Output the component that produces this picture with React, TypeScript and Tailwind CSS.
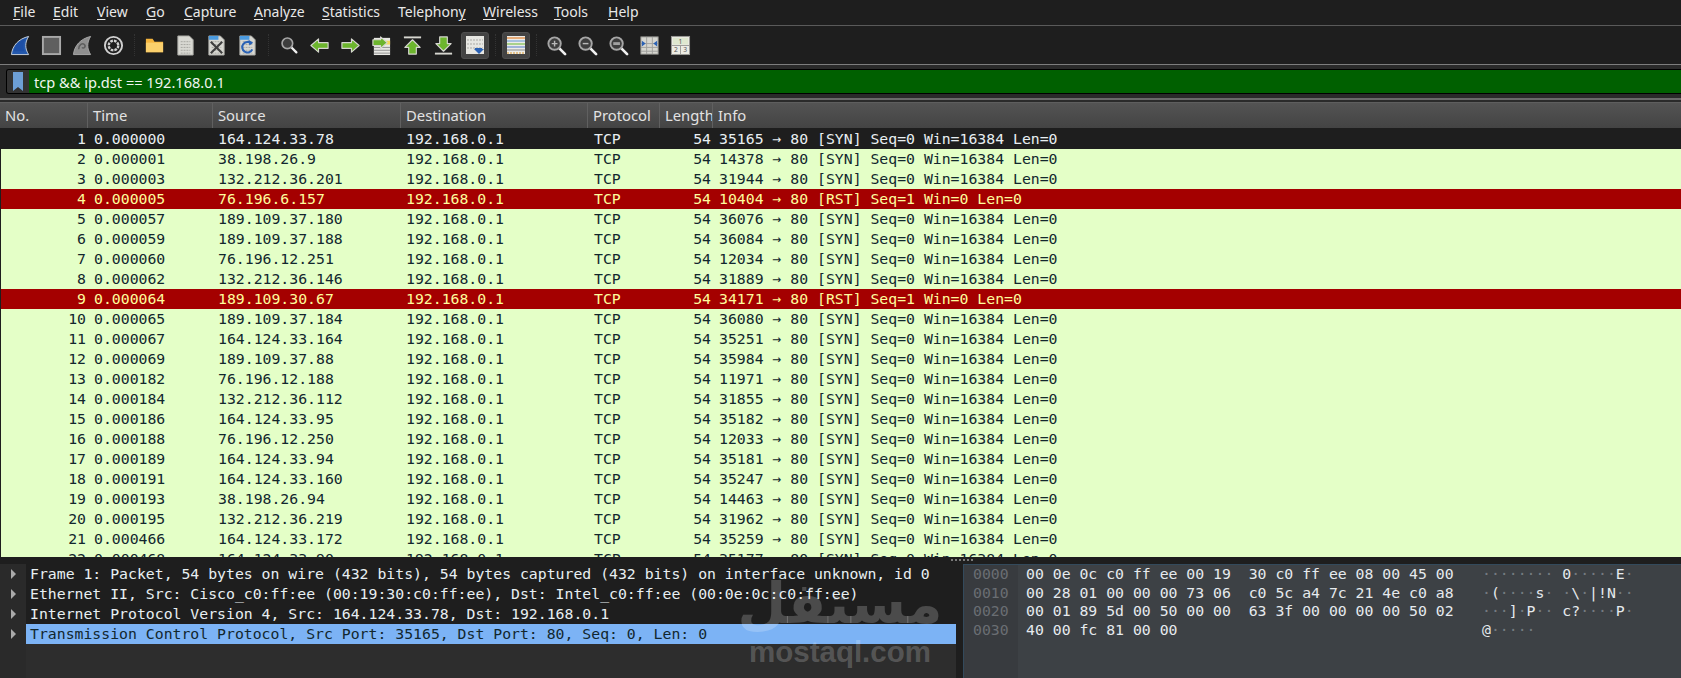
const UI_FONT = "font-['Noto_Sans','Open_Sans',sans-serif]";
const MONO_FONT = "font-['DejaVu_Sans_Mono','Liberation_Mono',monospace]";

type Packet = [number, string, string, number, "SYN" | "RST"];

const PACKETS: Packet[] = [
  [1, "0.000000", "164.124.33.78", 35165, "SYN"],
  [2, "0.000001", "38.198.26.9", 14378, "SYN"],
  [3, "0.000003", "132.212.36.201", 31944, "SYN"],
  [4, "0.000005", "76.196.6.157", 10404, "RST"],
  [5, "0.000057", "189.109.37.180", 36076, "SYN"],
  [6, "0.000059", "189.109.37.188", 36084, "SYN"],
  [7, "0.000060", "76.196.12.251", 12034, "SYN"],
  [8, "0.000062", "132.212.36.146", 31889, "SYN"],
  [9, "0.000064", "189.109.30.67", 34171, "RST"],
  [10, "0.000065", "189.109.37.184", 36080, "SYN"],
  [11, "0.000067", "164.124.33.164", 35251, "SYN"],
  [12, "0.000069", "189.109.37.88", 35984, "SYN"],
  [13, "0.000182", "76.196.12.188", 11971, "SYN"],
  [14, "0.000184", "132.212.36.112", 31855, "SYN"],
  [15, "0.000186", "164.124.33.95", 35182, "SYN"],
  [16, "0.000188", "76.196.12.250", 12033, "SYN"],
  [17, "0.000189", "164.124.33.94", 35181, "SYN"],
  [18, "0.000191", "164.124.33.160", 35247, "SYN"],
  [19, "0.000193", "38.198.26.94", 14463, "SYN"],
  [20, "0.000195", "132.212.36.219", 31962, "SYN"],
  [21, "0.000466", "164.124.33.172", 35259, "SYN"],
  [22, "0.000468", "164.124.33.90", 35177, "SYN"],
];

const MENU: [string, string, string, string][] = [
  ["", "F", "ile", "w-[40px]"],
  ["", "E", "dit", "w-[44px]"],
  ["", "V", "iew", "w-[49px]"],
  ["", "G", "o", "w-[38px]"],
  ["", "C", "apture", "w-[70px]"],
  ["", "A", "nalyze", "w-[68px]"],
  ["", "S", "tatistics", "w-[76px]"],
  ["Telephon", "y", "", "w-[85px]"],
  ["", "W", "ireless", "w-[71px]"],
  ["", "T", "ools", "w-[54px]"],
  ["", "H", "elp", "w-[40px]"],
];

const COLS = "grid grid-cols-[88px_125px_188px_187px_72px_53px_1fr]";

const HEX = [
  ["0000", "00 0e 0c c0 ff ee 00 19  30 c0 ff ee 08 00 45 00", "········ 0·····E·"],
  ["0010", "00 28 01 00 00 00 73 06  c0 5c a4 7c 21 4e c0 a8", "·(····s· ·\\·|!N··"],
  ["0020", "00 01 89 5d 00 50 00 00  63 3f 00 00 00 00 50 02", "···]·P·· c?····P·"],
  ["0030", "40 00 fc 81 00 00", "@·····"],
];

const DETAILS = [
  "Frame 1: Packet, 54 bytes on wire (432 bits), 54 bytes captured (432 bits) on interface unknown, id 0",
  "Ethernet II, Src: Cisco_c0:ff:ee (00:19:30:c0:ff:ee), Dst: Intel_c0:ff:ee (00:0e:0c:c0:ff:ee)",
  "Internet Protocol Version 4, Src: 164.124.33.78, Dst: 192.168.0.1",
  "Transmission Control Protocol, Src Port: 35165, Dst Port: 80, Seq: 0, Len: 0",
];

function Icon({ children }: { children: React.ReactNode }) {
  return (
    <div className="w-[31px] h-[38px] flex items-center justify-center shrink-0">
      <svg width="21" height="21" viewBox="0 0 22 22">
        {children}
      </svg>
    </div>
  );
}

function Sep() {
  return (
    <div className="w-[10px] h-[38px] flex items-center justify-center shrink-0">
      <div className="h-[22px] border-l border-dotted border-[#333333]" />
    </div>
  );
}

function Fin({ grey }: { grey?: boolean }) {
  return (
    <g>
      <path
        d="M1.5 20.5C2.5 11 9 4 19.5 1.5C15.5 8 15.5 14 19.5 20.5Z"
        fill={grey ? "#8f8f8f" : "#2459ad"}
        stroke={grey ? "#a8a8a8" : "#c9d3de"}
        strokeWidth="1"
      />
      {grey ? (
        <path d="M7 15C7 10 11 8 13 10C15 12 12 15 10.500 13" fill="none" stroke="#5e5e5e" strokeWidth="1.600" />
      ) : (
        <path d="M4 17C5 11 10 6 16 4C13.500 9 13.500 13 15 17Z" fill="#1d4fa6" />
      )}
    </g>
  );
}

function Paper({ children }: { children?: React.ReactNode }) {
  return (
    <g>
      <path d="M3 1H15L19 5V21H3Z" fill="#d8d8d2" stroke="#a9a9a5" strokeWidth="1" />
      <path d="M6 7H16M6 10H16M6 13H16M6 16H16M6 19H16" stroke="#a5a5a0" strokeWidth="1" strokeDasharray="2 1" />
      {children}
    </g>
  );
}

function Lens({ mark }: { mark?: "plus" | "minus" | "bar" | "none" }) {
  return (
    <g>
      <path d="M13.500 13.500L20 20" stroke="#f0f0f0" strokeWidth="2.800" strokeLinecap="round" />
      <circle cx="9" cy="9" r="6.500" fill="#3d3d3d" stroke="#a6a6a6" strokeWidth="2" />
      {mark === "plus" && <path d="M6 9H12M9 6V12" stroke="#b8b8b8" strokeWidth="1.500" />}
      {mark === "minus" && <path d="M6 9H12" stroke="#b8b8b8" strokeWidth="1.500" />}
      {mark === "bar" && <rect x="5.500" y="7.500" width="7" height="3" fill="#a0a0a0" />}
    </g>
  );
}

function Arrow({ d }: { d: string }) {
  return <path d={d} fill="#6cb52d" stroke="#d6d6d0" strokeWidth="1.200" strokeLinejoin="round" />;
}

function Toolbar() {
  return (
    <div className="h-[38px] flex items-center pl-[5px] bg-[#1e1e1e] border-b border-[#7d7d7d] box-content">
      <Icon><Fin /></Icon>
      <Icon>
        <rect x="2" y="2" width="18" height="18" fill="#5f5f5f" stroke="#a9a9a9" strokeWidth="2" />
      </Icon>
      <Icon><Fin grey /></Icon>
      <Icon>
        <circle cx="11" cy="11" r="9" fill="none" stroke="#d0d0d0" strokeWidth="2" />
        <circle cx="11" cy="11" r="5" fill="none" stroke="#cfcfcf" strokeWidth="2.500" strokeDasharray="2.800 1.100" />
      </Icon>
      <Sep />
      <Icon>
        <path d="M2 4H9L11 7H20V18H2Z" fill="#f4b43c" />
        <rect x="2" y="8" width="18" height="10" fill="#fbd06c" />
      </Icon>
      <Icon><Paper /></Icon>
      <Icon>
        <Paper>
          <path d="M3 1H13V5H3Z" fill="#4b9be0" />
          <path d="M5 7L17 19M17 7L5 19" stroke="#3f3f3f" strokeWidth="2.200" />
        </Paper>
      </Icon>
      <Icon>
        <Paper>
          <path d="M3 1H13V5H3Z" fill="#4b9be0" />
          <path d="M15 9A5.500 5.500 0 1 0 16 15" fill="none" stroke="#2b62b5" strokeWidth="2.200" />
          <path d="M12 5L17 8L13 11Z" fill="#2b62b5" />
        </Paper>
      </Icon>
      <Sep />
      <div className="w-[31px] h-[38px] flex items-center justify-center shrink-0">
        <svg width="18" height="18" viewBox="0 0 22 22">
          <Lens mark="none" />
        </svg>
      </div>
      <Icon><Arrow d="M2 11L10 4V8H20V14H10V18Z" /></Icon>
      <Icon><Arrow d="M20 11L12 4V8H2V14H12V18Z" /></Icon>
      <Icon>
        <path d="M3 3H20V21H3Z" fill="#e8e8e4" />
        <path d="M3 13H20M3 16H20M3 19H20" stroke="#8f8f8f" strokeWidth="1" />
        <rect x="13" y="6" width="7" height="4" fill="#f3d95a" />
        <Arrow d="M17 8L10 2V5H2V11H10V14Z" />
      </Icon>
      <Icon>
        <path d="M2 2.500H20" stroke="#d6d6d0" strokeWidth="2" />
        <Arrow d="M11 5L19 13H15V20H7V13H3Z" />
      </Icon>
      <Icon>
        <path d="M2 19.500H20" stroke="#d6d6d0" strokeWidth="2" />
        <Arrow d="M11 17L19 9H15V2H7V9H3Z" />
      </Icon>
      <div className="w-[31px] h-[38px] flex items-center justify-center shrink-0">
        <div className="w-[28px] h-[27px] rounded-[3px] bg-[#434343] border border-[#4e4e4e] flex items-center justify-center">
          <svg width="20" height="20" viewBox="0 0 20 20">
            <rect x="1" y="1" width="18" height="18" fill="#e6e6e2" />
            <path d="M2 5H18M2 9H18M2 13H18" stroke="#a9a9a5" strokeWidth="1" strokeDasharray="2 1" />
            <path d="M9 14H19L14 19Z" fill="#2b62b5" />
            <rect x="10" y="13" width="7" height="2" fill="#2b62b5" />
          </svg>
        </div>
      </div>
      <Sep />
      <div className="w-[31px] h-[38px] flex items-center justify-center shrink-0">
        <div className="w-[28px] h-[27px] rounded-[3px] bg-[#434343] border border-[#4e4e4e] flex items-center justify-center">
          <svg width="20" height="20" viewBox="0 0 20 20">
            <rect x="1" y="1" width="18" height="18" fill="#ecece8" />
            <path d="M1 3H19" stroke="#e2812e" strokeWidth="1.200" />
            <path d="M1 6H19" stroke="#7aa7d8" strokeWidth="1.200" />
            <path d="M1 9H19" stroke="#7cc24c" strokeWidth="1.200" />
            <path d="M1 12H19" stroke="#6c8fcf" strokeWidth="1.200" />
            <path d="M1 15H19" stroke="#9c9c9c" strokeWidth="1.200" />
            <path d="M1 18H19" stroke="#d9962b" strokeWidth="1.200" strokeDasharray="2 1" />
          </svg>
        </div>
      </div>
      <Sep />
      <Icon><Lens mark="plus" /></Icon>
      <Icon><Lens mark="minus" /></Icon>
      <Icon><Lens mark="bar" /></Icon>
      <Icon>
        <rect x="2" y="2" width="18" height="18" fill="#d6d6d0" stroke="#9a9a96" strokeWidth="1" />
        <path d="M8 2V20M14 2V20M2 9H20M2 13H20M2 17H20" stroke="#a0a09c" strokeWidth="1" />
        <path d="M3 6L7 9L3 12ZM19 6L15 9L19 12Z" fill="#2b62b5" />
      </Icon>
      <Icon>
        <rect x="1.500" y="1.500" width="19" height="19" fill="#ecece4" stroke="#9a9a96" strokeWidth="1" />
        <path d="M1.500 11H20.500M11 11V20.500" stroke="#9a9a96" strokeWidth="1" />
        <rect x="3" y="3" width="16" height="7" fill="#dfe8cf" />
        <text x="11" y="9" fontSize="7" textAnchor="middle" fill="#555">1</text>
        <text x="6.200" y="18" fontSize="7" textAnchor="middle" fill="#555">2</text>
        <text x="15.800" y="18" fontSize="7" textAnchor="middle" fill="#555">3</text>
      </Icon>
    </div>
  );
}

function PacketRow({ packet, first }: { packet: Packet; first: boolean }) {
  const [no, time, src, port, flag] = packet;
  const rst = flag === "RST";
  const info = rst
    ? `${port} → 80 [RST] Seq=1 Win=0 Len=0`
    : `${port} → 80 [SYN] Seq=0 Win=16384 Len=0`;
  const tone = first
    ? "bg-[#1e1e1e] text-[#e8eff2] h-[21px]"
    : rst
      ? "bg-[#a40000] text-[#fffc9c] h-[20px]"
      : "bg-[#e4ffc7] text-[#12272e] h-[20px]";
  return (
    <div className={`${COLS} ${tone} items-center whitespace-pre`}>
      <div className="text-right pr-[3px]">{no}</div>
      <div className="pl-[5px]">{time}</div>
      <div className="pl-[4px]">{src}</div>
      <div className="pl-[4px]">{"192.168.0.1"}</div>
      <div className="pl-[5px]">TCP</div>
      <div className="text-right pr-[3px]">54</div>
      <div className="pl-[5px]">{info}</div>
    </div>
  );
}

function HeaderCell({ label, border = true }: { label: string; border?: boolean }) {
  return (
    <div className={`pl-[5px] h-full flex items-center overflow-hidden whitespace-nowrap ${border ? "border-r border-[#606060]" : ""}`}>
      {label}
    </div>
  );
}

export default function App() {
  return (
    <div className={`relative w-full h-[678px] overflow-hidden bg-[#1e1e1e] text-[14px] ${UI_FONT}`}>
      {/* menu bar */}
      <div className="h-[25px] flex items-center pl-[13px] pb-[2px] text-[#e8e8e8] text-[14px] bg-[#1e1e1e]">
        {MENU.map(([before, key, after, width]) => (
          <div key={key} className={`${width} shrink-0 whitespace-nowrap`}>
            {before}
            <span className="underline underline-offset-2">{key}</span>
            {after}
          </div>
        ))}
      </div>
      <div className="h-px bg-[#5a5a5a]" />

      <Toolbar />

      {/* display filter */}
      <div className="h-[33px] bg-[#2a2a2a] flex items-center pl-[6px]">
        <div className="flex-1 h-[25px] flex border-y border-l border-black rounded-l-[3px] overflow-hidden">
          <div className="w-[22px] bg-[#333333] flex items-center justify-center">
            <svg width="12" height="19" viewBox="0 0 12 19">
              <path d="M1 0H11V19L6 15L1 19Z" fill="#6d9fd6" />
            </svg>
          </div>
          <div className="flex-1 bg-[#006000] text-[#f0f5f0] pl-[5px] text-[14.6px] leading-[24px]">
            tcp &amp;&amp; ip.dst == 192.168.0.1
          </div>
        </div>
      </div>

      {/* pane splitter + column header */}
      <div className="h-[2px] bg-[#6a6a6a]" />
      <div className="h-[2px] bg-[#2a2a2a]" />
      <div className={`${COLS} h-[26px] bg-gradient-to-b from-[#535353] to-[#444444] border-t border-[#5e5e5e] text-[#e2e2e2] text-[14.8px]`}>
        <HeaderCell label="No." />
        <HeaderCell label="Time" />
        <HeaderCell label="Source" />
        <HeaderCell label="Destination" />
        <HeaderCell label="Protocol" />
        <HeaderCell label="Length" />
        <HeaderCell label="Info" border={false} />
      </div>

      {/* packet list */}
      <div className={`h-[429px] overflow-hidden border-l border-[#1e1e1e] ${MONO_FONT} text-[14.8px] leading-[20px]`}>
        {PACKETS.map((p, i) => (
          <PacketRow key={p[0]} packet={p} first={i === 0} />
        ))}
      </div>

      {/* bottom splitter */}
      <div className="h-[7px] flex justify-end pr-[708px] pt-[2px]">
        <div className="w-[22px] h-[3px] border-t-2 border-dotted border-[#7a7a7a]" />
      </div>

      {/* details + bytes */}
      <div className={`flex h-[114px] ${MONO_FONT} text-[14.8px]`}>
        <div className="w-[956px] shrink-0 flex bg-[#2d2d2d]">
          <div className="w-[26px] shrink-0 bg-[#2a2a2a] pl-[10px]">
            {DETAILS.map((d) => (
              <div key={d} className="h-[20px] flex items-center">
                <svg width="7" height="10" viewBox="0 0 7 10">
                  <path d="M1 0L6 5L1 10Z" fill="#a9a9a9" />
                </svg>
              </div>
            ))}
          </div>
          <div className="flex-1 min-w-0">
            {DETAILS.map((d, i) => (
              <div
                key={d}
                className={`h-[20px] leading-[20px] pl-[4px] whitespace-pre overflow-hidden ${
                  i === 3 ? "bg-[#7cb3f5] text-[#12272e]" : "bg-[#1e1e1e] text-[#e8eff2]"
                }`}
              >
                {d}
              </div>
            ))}
          </div>
        </div>
        <div className="w-[7px] shrink-0" />
        <div className="flex-1 flex bg-[#3d4145] border-t border-l border-[#334a5c] text-[#e6eaee] leading-[18.7px] whitespace-pre">
          <div className="w-[54px] shrink-0 bg-[#383b3f] pl-[9px] text-[#6a6e73]">
            {HEX.map((r) => (
              <div key={r[0]}>{r[0]}</div>
            ))}
          </div>
          <div className="w-[464px] shrink-0 pl-[8px]">
            {HEX.map((r) => (
              <div key={r[0]}>{r[1]}</div>
            ))}
          </div>
          <div>
            {HEX.map((r) => (
              <div key={r[0]}>
                {r[2].split("").map((c, i) => (
                  <span key={i} className={c === "·" ? "text-[#747a80]" : ""}>
                    {c}
                  </span>
                ))}
              </div>
            ))}
          </div>
        </div>
      </div>

      {/* site watermark */}
      <div className="absolute left-[748px] top-[570px] w-[184px] flex flex-col items-center text-white/20 pointer-events-none">
        <div className="font-['DejaVu_Sans',sans-serif] font-bold text-[56px] leading-[68px]" dir="rtl">
          مستقل
        </div>
        <div className="font-['Liberation_Sans',sans-serif] font-bold text-[29.5px] leading-[28px]">mostaql.com</div>
      </div>
    </div>
  );
}
